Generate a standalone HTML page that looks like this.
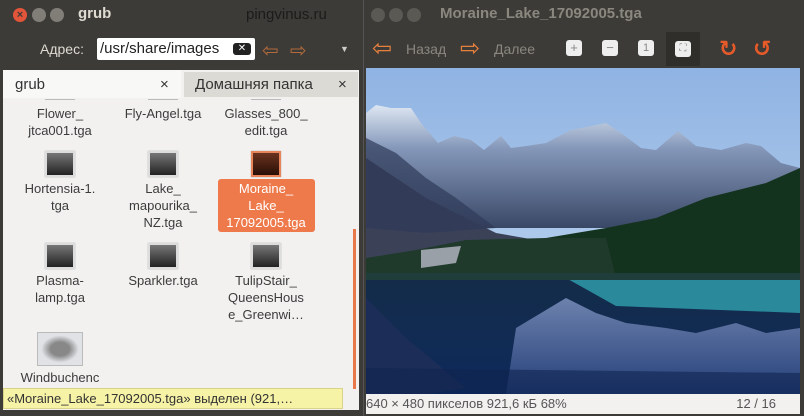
<!DOCTYPE html>
<html><head><meta charset="utf-8"><style>
body{margin:0;width:804px;height:416px;background:#3c3b37;position:relative;overflow:hidden;font-family:"Liberation Sans","DejaVu Sans",sans-serif}
.a{position:absolute}
.t{position:absolute;font-size:13px;color:#3c3c3c;text-align:center;line-height:17px;white-space:nowrap}
.th{position:absolute;width:26px;height:22px;background:linear-gradient(#777,#222);border:2px solid #ddd;box-shadow:0 0 1px #999}
.btn{position:absolute;width:14px;height:14px;border-radius:50%;background:#66655f;top:8px}
</style></head><body>
<div class="a" style="left:0;top:0;width:362px;height:416px;background:#3c3b37"></div>
<div class="btn" style="left:13px;background:#e2553a;color:#3c3b37;font-size:11px;text-align:center;line-height:14px;font-weight:bold">×</div>
<div class="btn" style="left:32px;background:#807e77"></div>
<div class="btn" style="left:50px;background:#807e77"></div>
<div class="a" style="left:78px;top:5px;color:#dfdbd2;font-weight:bold;font-size:15px">grub</div>
<div class="a" style="left:246px;top:6px;color:#1b1b1b;font-size:15px">pingvinus.ru</div>
<div class="a" style="left:40px;top:41px;color:#dfdbd2;font-size:14px">Адрес:</div>
<div class="a" style="left:97px;top:38px;width:158px;height:22px;background:#fff;border-radius:2px;font-size:15px;line-height:22px;color:#222;overflow:hidden;padding-left:3px;box-sizing:border-box">/usr/share/images<span class="a" style="right:4px;top:5px;width:18px;height:12px;background:#222;border-radius:3px;color:#fff;font-size:10px;line-height:12px;text-align:center">✕</span></div>
<div class="a" style="left:262px;top:38px;color:#b26a3c;font-size:20px">⇦</div>
<div class="a" style="left:290px;top:38px;color:#b26a3c;font-size:20px">⇨</div>
<div class="a" style="left:340px;top:44px;color:#ccc;font-size:9px">▼</div>
<div class="a" style="left:3px;top:70px;width:356px;height:340px;background:#f2f1f0"></div>
<div class="a" style="left:3px;top:70px;width:178px;height:28px;background:#f8f8f7"></div>
<div class="a" style="left:184px;top:72px;width:174px;height:25px;background:#dcdad5"></div>
<div class="a" style="left:15px;top:76px;font-size:15px;color:#333">grub</div>
<div class="a" style="left:160px;top:76px;font-size:15px;color:#333">×</div>
<div class="a" style="left:195px;top:76px;font-size:15px;color:#333">Домашняя папка</div>
<div class="a" style="left:338px;top:76px;font-size:15px;color:#333">×</div>
<div class="a" style="left:45px;top:99px;width:30px;height:1px;background:#bbb"></div>
<div class="a" style="left:148px;top:99px;width:30px;height:1px;background:#bbb"></div>
<div class="a" style="left:251px;top:99px;width:30px;height:1px;background:#bbb"></div>
<div class="t" style="left:10px;width:100px;top:105px">Flower_<br>jtca001.tga</div>
<div class="t" style="left:113px;width:100px;top:105px">Fly-Angel.tga</div>
<div class="t" style="left:216px;width:100px;top:105px">Glasses_800_<br>edit.tga</div>
<div class="th" style="left:45px;top:151px"></div>
<div class="th" style="left:148px;top:151px"></div>
<div class="th" style="left:251px;top:151px;background:linear-gradient(#6a3320,#2a0f06);border-color:#e8845a"></div>
<div class="a" style="left:218px;top:179px;width:97px;height:53px;background:#ee7a4b;border-radius:3px"></div>
<div class="t" style="left:10px;width:100px;top:180px">Hortensia-1.<br>tga</div>
<div class="t" style="left:113px;width:100px;top:180px">Lake_<br>mapourika_<br>NZ.tga</div>
<div class="t" style="left:216px;width:100px;top:180px;color:#fff">Moraine_<br>Lake_<br>17092005.tga</div>
<div class="th" style="left:45px;top:243px"></div>
<div class="th" style="left:148px;top:243px"></div>
<div class="th" style="left:251px;top:243px"></div>
<div class="t" style="left:10px;width:100px;top:272px">Plasma-<br>lamp.tga</div>
<div class="t" style="left:113px;width:100px;top:272px">Sparkler.tga</div>
<div class="t" style="left:216px;width:100px;top:272px">TulipStair_<br>QueensHous<br>e_Greenwi…</div>
<div class="a" style="left:37px;top:332px;width:44px;height:32px;background:radial-gradient(#888 30%,#e0e2e6 60%);border:1px solid #bbb"></div>
<div class="t" style="left:10px;width:100px;top:369px">Windbuchenc</div>
<div class="a" style="left:353px;top:229px;width:3px;height:160px;background:#e8774a"></div>
<div class="a" style="left:3px;top:388px;width:340px;height:21px;background:#f6f2a6;border:1px solid #d9d38a;font-size:13px;line-height:20px;color:#333;padding-left:3px;box-sizing:border-box">«Moraine_Lake_17092005.tga» выделен (921,…</div>
<div class="a" style="left:363px;top:0;width:441px;height:416px;background:#3c3b37;border-left:1px solid #555"></div>
<div class="btn" style="left:371px;background:#5a5954"></div>
<div class="btn" style="left:389px;background:#5a5954"></div>
<div class="btn" style="left:407px;background:#5a5954"></div>
<div class="a" style="left:440px;top:5px;color:#8a877f;font-weight:bold;font-size:15px">Moraine_Lake_17092005.tga</div>
<div class="a" style="left:372px;top:36px;color:#e6803e;font-size:24px;line-height:26px">⇦</div>
<div class="a" style="left:406px;top:41px;color:#8a877f;font-size:14px">Назад</div>
<div class="a" style="left:460px;top:36px;color:#e6803e;font-size:24px;line-height:26px">⇨</div>
<div class="a" style="left:494px;top:41px;color:#8a877f;font-size:14px">Далее</div>
<div class="a" style="left:566px;top:40px;width:16px;height:16px;background:#eee;border-radius:3px;font-size:13px;text-align:center;line-height:16px;color:#888">+</div>
<div class="a" style="left:602px;top:40px;width:16px;height:16px;background:#eee;border-radius:3px;font-size:13px;text-align:center;line-height:16px;color:#888">−</div>
<div class="a" style="left:638px;top:40px;width:16px;height:16px;background:#eee;border-radius:3px;font-size:11px;text-align:center;line-height:16px;color:#888">1</div>
<div class="a" style="left:666px;top:32px;width:34px;height:34px;background:#2f2e2b"></div>
<div class="a" style="left:675px;top:41px;width:16px;height:16px;background:#eee;border-radius:3px;font-size:10px;text-align:center;line-height:16px;color:#888">⛶</div>
<div class="a" style="left:719px;top:36px;color:#e65a2a;font-size:22px;font-weight:bold">↻</div>
<div class="a" style="left:753px;top:36px;color:#e65a2a;font-size:22px;font-weight:bold">↺</div>
<svg class="a" style="left:366px;top:68px" width="434" height="326" viewBox="0 0 434 326">
<defs>
<linearGradient id="sky" x1="0" y1="0" x2="0" y2="1"><stop offset="0" stop-color="#8fb3e3"/><stop offset="1" stop-color="#c8dcf0"/></linearGradient>
<linearGradient id="mt" x1="0" y1="0" x2="0" y2="1"><stop offset="0" stop-color="#dde6f2"/><stop offset=".35" stop-color="#8598ba"/><stop offset="1" stop-color="#3a4866"/></linearGradient>
<linearGradient id="lake" x1="0" y1="0" x2="0" y2="1"><stop offset="0" stop-color="#142c48"/><stop offset="1" stop-color="#0e2a5c"/></linearGradient>
<linearGradient id="rf" x1="0" y1="0" x2="0" y2="1"><stop offset="0" stop-color="#6d82ad"/><stop offset="1" stop-color="#25407a"/></linearGradient>
</defs>
<rect width="434" height="326" fill="url(#sky)"/>
<polygon points="0,45 10,37 25,40 45,40 55,55 72,75 88,68 105,72 118,82 135,68 145,80 160,78 180,75 205,62 240,55 255,65 275,80 290,82 312,63 330,78 355,82 380,75 395,78 415,95 434,100 434,160 0,160" fill="url(#mt)"/>
<polygon points="0,90 30,110 60,130 100,150 130,165 170,172 120,180 60,200 0,200" fill="#3b4258"/>
<polygon points="0,70 30,85 60,110 90,130 130,160 60,165 0,160" fill="#2f3a58" opacity=".7"/>
<polygon points="180,170 240,160 290,150 340,130 400,115 434,100 434,212 180,212" fill="#14331f"/>
<polygon points="50,182 100,172 180,170 240,170 250,210 0,210 0,190" fill="#1f3a2a"/>
<polygon points="55,182 95,178 90,195 55,200" fill="#9aa0a8"/>
<rect y="205" width="434" height="121" fill="url(#lake)"/>
<polygon points="200,210 434,212 434,245 250,238" fill="#2a8a9c"/>
<polygon points="0,205 434,205 434,212 0,212" fill="#1f3d3a"/>
<polygon points="0,230 40,270 100,320 60,326 0,326" fill="#1c2e58"/>
<polygon points="150,260 200,230 230,245 260,255 300,260 330,265 370,255 400,265 434,260 434,326 140,326" fill="url(#rf)"/>
<polygon points="0,300 434,305 434,326 0,326" fill="#0f2550" opacity=".6"/>
</svg>
<div class="a" style="left:366px;top:394px;width:434px;height:20px;background:#f2f1f0;font-size:13px;line-height:20px;color:#555"><span>640 × 480 пикселов  921,6 кБ   68%</span><span style="position:absolute;right:24px">12 / 16</span></div>
</body></html>
